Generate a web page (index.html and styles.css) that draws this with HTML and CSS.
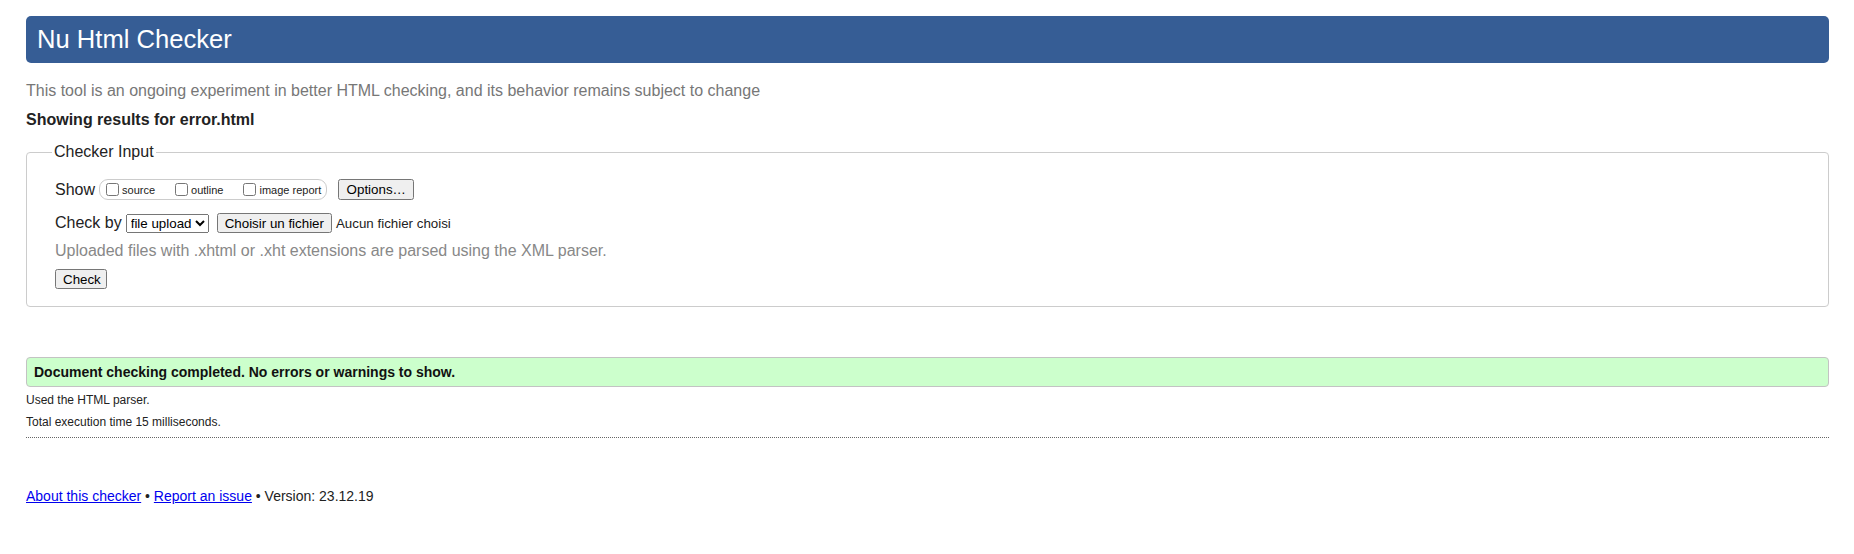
FILE: index.html
```html
<!DOCTYPE html>
<html lang="en">
<head>
<meta charset="utf-8">
<title>Showing results for error.html - Nu Html Checker</title>
<link rel="stylesheet" href="styles.css">
</head>
<body>
<h1 class="title">Nu Html Checker</h1>
<p class="tagline">This tool is an ongoing experiment in better HTML checking, and its behavior remains subject to change</p>
<p class="showing">Showing results for error.html</p>
<fieldset class="input">
  <legend class="input-legend">Checker Input</legend>
  <div class="row row-show">
    <span class="lbl">Show</span>
    <span class="checkboxes">
      <label class="cb"><input type="checkbox">source</label>
      <label class="cb"><input type="checkbox">outline</label>
      <label class="cb"><input type="checkbox">image report</label>
    </span>
    <button class="btn btn-options" type="button">Options…</button>
  </div>
  <div class="row row-check">
    <span class="lbl">Check by</span>
    <select class="sel"><option>file upload</option></select>
    <button class="btn btn-file" type="button">Choisir un fichier</button>
    <span class="nofile">Aucun fichier choisi</span>
  </div>
  <p class="hint">Uploaded files with .xhtml or .xht extensions are parsed using the XML parser.</p>
  <div class="row row-submit">
    <button class="btn btn-check" type="button">Check</button>
  </div>
</fieldset>
<div class="success">Document checking completed. No errors or warnings to show.</div>
<p class="details">Used the HTML parser.</p>
<p class="details">Total execution time 15 milliseconds.</p>
<hr class="sep">
<p class="footer"><a href="#">About this checker</a> • <a href="#">Report an issue</a> • Version: 23.12.19</p>
</body>
</html>
```
FILE: styles.css
```css
html, body {
  background: #fff;
}
body {
  margin: 0;
  padding: 16px 25px 0 26px;
  font-family: "Liberation Sans", Arial, sans-serif;
  font-size: 16px;
  color: #222;
}
.title {
  margin: 0;
  background: #365d95;
  color: #fff;
  font-weight: normal;
  font-size: 25.6px;
  line-height: 29px;
  padding: 9px 11px;
  border-radius: 5px;
}
.tagline {
  margin: 19px 0 0;
  line-height: 18px;
  color: #777;
}
.showing {
  margin: 11px 0 0;
  line-height: 18px;
  font-weight: bold;
}
.input {
  margin: 14px 0 0;
  padding: 0 28px 17px;
  border: 1px solid #ccc;
  border-radius: 4px;
}
.input-legend {
  margin-left: -3px;
  padding: 0 2px;
  line-height: 18px;
}
.row {
  display: flex;
  align-items: center;
}
.row-show {
  margin-top: 18px;
  height: 21px;
}
.lbl {
  margin-right: 4px;
}
.checkboxes {
  display: flex;
  align-items: center;
  height: 19px;
  border: 1px solid #ccc;
  border-radius: 9px;
  padding: 0 5px 0 2px;
  font-size: 11px;
}
.cb {
  display: flex;
  align-items: center;
  margin-right: 16px;
}
.cb:last-child {
  margin-right: 0;
}
.cb input {
  margin: 0 3px 0 4px;
  width: 13px;
  height: 13px;
}
.btn {
  font-family: "Liberation Sans", Arial, sans-serif;
  font-size: 13.33px;
}
.btn-options {
  margin-left: 11px;
  height: 21px;
  width: 76px;
}
.row-check {
  margin-top: 13px;
  height: 20px;
}
.sel {
  font-family: "Liberation Sans", Arial, sans-serif;
  font-size: 13.33px;
  width: 83px;
  height: 19px;
}
.btn-file {
  margin-left: 8px;
  height: 20px;
}
.nofile {
  margin-left: 4px;
  font-size: 13.33px;
}
.hint {
  margin: 9px 0 0;
  line-height: 18px;
  color: #888;
}
.row-submit {
  margin-top: 9px;
}
.btn-check {
  height: 20px;
  width: 52px;
}
.success {
  margin-top: 50px;
  background: #ccffcc;
  border: 1px solid #c3c3c3;
  border-radius: 4px;
  padding: 0 7px;
  height: 28px;
  line-height: 28px;
  font-size: 14px;
  font-weight: bold;
  color: #111;
}
.details {
  margin: 6px 0 0;
  font-size: 12px;
  line-height: 14px;
  color: #222;
}
.details + .details {
  margin-top: 8px;
}
.sep {
  margin: 8px 0 0;
  border: 0;
  border-top: 1px dotted #666;
  height: 0;
}
.footer {
  margin: 50px 0 0;
  font-size: 14px;
  line-height: 16px;
  color: #222;
}
.footer a {
  color: #0000ee;
}
```
